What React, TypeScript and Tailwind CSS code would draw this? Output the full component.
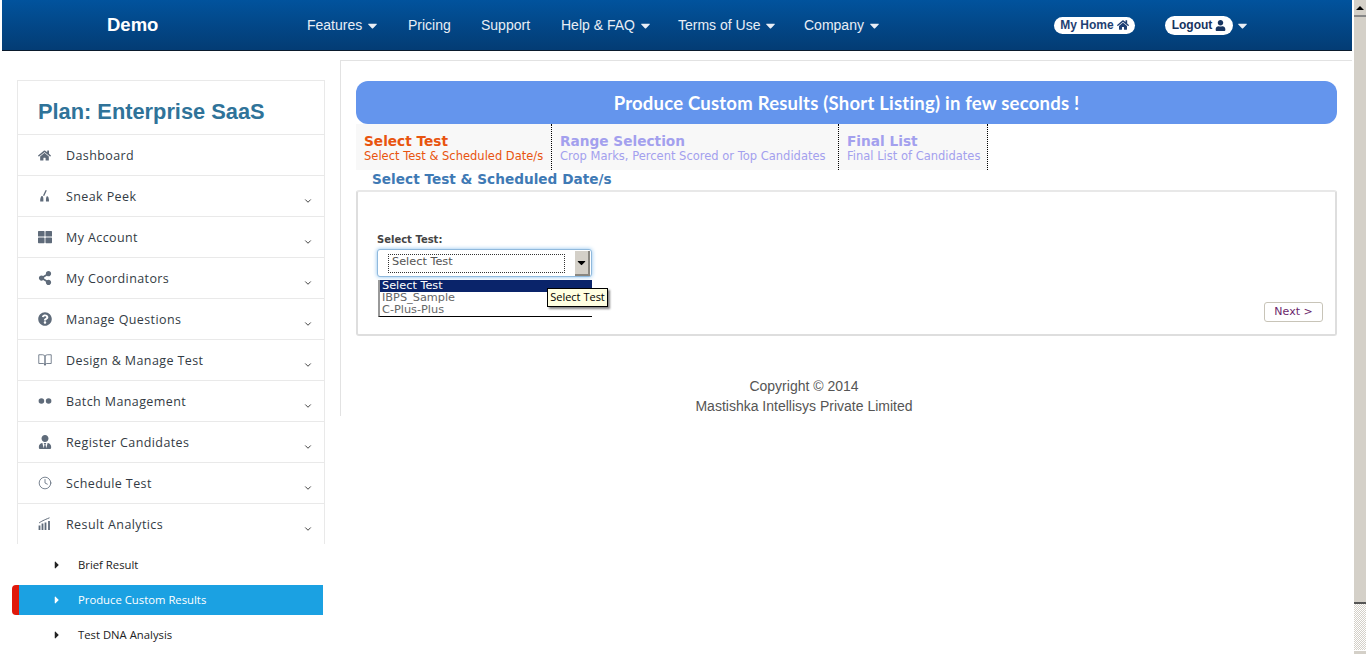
import React from 'react';
import { FaHome, FaUser, FaShareAlt, FaQuestionCircle, FaUserTie, FaCaretDown, FaCaretRight, FaThLarge } from 'react-icons/fa';
import { FiBookOpen, FiClock, FiChevronDown } from 'react-icons/fi';

const navLinks = [
  { label: 'Features', caret: true, width: 'w-[101px]' },
  { label: 'Pricing', caret: false, width: 'w-[73px]' },
  { label: 'Support', caret: false, width: 'w-[80px]' },
  { label: 'Help & FAQ', caret: true, width: 'w-[117px]' },
  { label: 'Terms of Use', caret: true, width: 'w-[126px]' },
  { label: 'Company', caret: true, width: 'w-[100px]' },
];

const SneakIcon = () => (
  <svg viewBox="0 0 14 14" className="w-[14px] h-[14px]" fill="#5f6b7a">
    <path d="M7.6 1 L8.8 1.6 L6.2 7 L5 6.6 Z" />
    <path d="M3.2 7.4 C4.8 6.4 5.6 8 5.4 12.6 L2.2 12.6 C2 10.4 2.4 8.4 3.2 7.4 Z" />
    <path d="M8.6 7.4 C10 6.8 11 8.4 11 12.6 L8 12.6 C7.8 10.4 8 8.8 8.6 7.4 Z" />
  </svg>
);

const DotsIcon = () => (
  <svg viewBox="0 0 14 14" className="w-[14px] h-[14px]" fill="#5f6b7a">
    <circle cx="3.4" cy="7" r="2.8" />
    <circle cx="10.6" cy="7" r="2.8" />
  </svg>
);

const ChartIcon = () => (
  <svg viewBox="0 0 14 14" className="w-[14px] h-[14px]" fill="none" stroke="#5f6b7a">
    <path d="M1.5 13 V8.5 M4.5 13 V6.5 M7.5 13 V5.5 M11 13 V4" strokeWidth="1.8" />
    <path d="M1 6 C3 4.5 6 3 11.5 0.8" strokeWidth="1" />
  </svg>
);

const iconClass = 'w-[14px] h-[14px] text-[#5f6b7a]';

const menuItems = [
  { label: 'Dashboard', icon: <FaHome className="w-[13px] h-[13px] text-[#5f6b7a]" />, chevron: false },
  { label: 'Sneak Peek', icon: <SneakIcon />, chevron: true },
  { label: 'My Account', icon: <FaThLarge className={iconClass} />, chevron: true },
  { label: 'My Coordinators', icon: <FaShareAlt className={iconClass} />, chevron: true },
  { label: 'Manage Questions', icon: <FaQuestionCircle className={iconClass} />, chevron: true },
  { label: 'Design & Manage Test', icon: <FiBookOpen className={iconClass} strokeWidth={1.4} />, chevron: true },
  { label: 'Batch Management', icon: <DotsIcon />, chevron: true },
  { label: 'Register Candidates', icon: <FaUserTie className={iconClass} />, chevron: true },
  { label: 'Schedule Test', icon: <FiClock className={iconClass} strokeWidth={1.4} />, chevron: true },
  { label: 'Result Analytics', icon: <ChartIcon />, chevron: true },
];

const subItems = [
  { label: 'Brief Result', active: false },
  { label: 'Produce Custom Results', active: true },
  { label: 'Test DNA Analysis', active: false },
];

const steps = [
  { title: 'Select Test', sub: 'Select Test & Scheduled Date/s', width: 'w-[196px]', color: 'text-[#e8540f]' },
  { title: 'Range Selection', sub: 'Crop Marks, Percent Scored or Top Candidates', width: 'w-[287px]', color: 'text-[#a3a0ee]' },
  { title: 'Final List', sub: 'Final List of Candidates', width: 'w-[149px]', color: 'text-[#a3a0ee]' },
];

const Header = () => (
  <header className="ml-[2px] h-[51px] shrink-0 flex items-center bg-gradient-to-b from-[#01539d] to-[#033c74] border-b border-[#0a1a2c] font-['Liberation_Sans',sans-serif] text-white">
    <div className="w-[105px] ml-[105px] text-[18.5px] font-bold">Demo</div>
    <nav className="flex ml-[95px] text-[14px] text-[#e8eef6]">
      {navLinks.map((link) => (
        <div key={link.label} className={`${link.width} flex items-center gap-[3px]`}>
          {link.label}
          {link.caret && <FaCaretDown className="w-[15px] h-[15px]" />}
        </div>
      ))}
    </nav>
    <div className="ml-[150px] w-[111px] flex items-center">
      <div className="h-[17px] w-[81px] rounded-full bg-white text-[#1f3f73] text-[12px] font-bold flex items-center justify-center gap-[3px]">
        My Home <FaHome className="w-[12px] h-[12px]" />
      </div>
    </div>
    <div className="flex items-center gap-[2px]">
      <div className="h-[19px] w-[68px] rounded-full bg-white text-[#16335f] text-[12px] font-bold flex items-center justify-center gap-[3px]">
        Logout <FaUser className="w-[11px] h-[11px]" />
      </div>
      <FaCaretDown className="w-[15px] h-[15px] text-[#e8eef6]" />
    </div>
  </header>
);

const Sidebar = () => (
  <aside className="w-[308px] ml-[17px] mt-[29px] shrink-0">
    <div className="border-x border-t border-[#e9e9e9]">
      <div className="h-[53px] pl-[20px] pt-[10px] flex items-center font-['Liberation_Sans',sans-serif] font-bold text-[21.8px] text-[#2f7399]">
        Plan: Enterprise SaaS
      </div>
      {menuItems.map((item) => (
        <div key={item.label} className="h-[41px] border-t border-[#e9e9e9] flex items-center pl-[19px] pr-[11px] font-['Open_Sans',sans-serif] text-[12.5px] tracking-[0.4px] text-[#333b44]">
          <span className="w-[15px] flex justify-center">{item.icon}</span>
          <span className="ml-[14px] flex-1 mt-[2px]">{item.label}</span>
          {item.chevron && <FiChevronDown className="w-[10px] h-[10px] mt-[9px] text-[#444]" strokeWidth={2.4} />}
        </div>
      ))}
    </div>
    <ul className="-ml-[5px] w-[311px] mt-[6px] flex flex-col gap-[5px] font-['Open_Sans',sans-serif] text-[11.3px]">
      {subItems.map((sub) => (
        <li
          key={sub.label}
          className={
            sub.active
              ? 'h-[30px] flex items-center pl-[32px] bg-[#1ba1e2] text-white border-l-[7px] border-[#e01a0c] rounded-l-[4px]'
              : 'h-[30px] flex items-center pl-[39px] text-[#222]'
          }
        >
          <FaCaretRight className={sub.active ? 'w-[12px] h-[12px] text-white' : 'w-[12px] h-[12px] text-[#222]'} />
          <span className="ml-[15px]">{sub.label}</span>
        </li>
      ))}
    </ul>
  </aside>
);

const SelectField = () => (
  <div className="relative w-[216px] ml-[19px] pt-[42px]">
    <div className="text-[10px] font-bold text-[#444] font-['DejaVu_Sans',sans-serif] leading-[12px]">Select Test:</div>
    <div className="mt-[3px] h-[28px] w-[215px] rounded-[3px] border border-[#8fb9dd] shadow-[0_0_4px_#8cc1ee] bg-white flex items-center pl-[10px] pr-[1px]">
      <div className="h-[19px] w-[177px] border border-dotted border-[#333] flex items-center pl-[3px] pb-[2px] text-[11.3px] text-[#555] font-['DejaVu_Sans',sans-serif]">
        Select Test
      </div>
      <div className="ml-auto h-[25px] w-[15px] bg-[#d4d0c8] border-r-2 border-b-2 border-[#8a8780] flex items-center justify-center">
        <FaCaretDown className="w-[13px] h-[13px] text-black" />
      </div>
    </div>
    <div className="mt-[3px] ml-[1px] w-[214px] h-[37px] border-l-2 border-b border-l-[#999] border-b-black bg-white text-[11.3px] leading-[12px] text-[#666] font-['DejaVu_Sans',sans-serif]">
      <div className="h-[12px] pl-[2px] bg-[#0a246a] text-white">Select Test</div>
      <div className="h-[12px] pl-[2px]">IBPS_Sample</div>
      <div className="h-[12px] pl-[2px]">C-Plus-Plus</div>
    </div>
    <div className="absolute left-[170px] top-[96px] h-[19px] w-[61px] bg-[#ffffe1] border border-black shadow-[2px_2px_2px_#888] flex items-center justify-center text-[11px] text-black font-['Open_Sans',sans-serif] whitespace-nowrap">
      Select Test
    </div>
  </div>
);

const Main = () => (
  <main className="ml-[15px] mt-[9px] flex-1 h-[356px] border-l border-t border-[#e2e2e2] pl-[15px] pr-[15px] pt-[20px]">
    <div className="h-[43px] pt-[2px] rounded-[12px] bg-[#6495ed] flex items-center justify-center font-['Lato',sans-serif] font-bold text-[18.5px] tracking-[0.22px] text-white">
      Produce Custom Results (Short Listing) in few seconds !
    </div>
    <div className="flex h-[46px] font-['DejaVu_Sans',sans-serif]">
      {steps.map((step) => (
        <div key={step.title} className={`${step.width} ${step.color} bg-[#f8f8f8] border-r border-dotted border-black pl-[8px] pt-[9px]`}>
          <div className="text-[13.7px] font-bold leading-[16px]">{step.title}</div>
          <div className="text-[11.5px] leading-[14px] whitespace-nowrap">{step.sub}</div>
        </div>
      ))}
    </div>
    <h2 className="ml-[16px] h-[20px] leading-[18px] font-['DejaVu_Sans',sans-serif] font-bold text-[13.67px] text-[#3f7ab5]">
      Select Test &amp; Scheduled Date/s
    </h2>
    <div className="relative h-[146px] rounded-[3px] border-2 border-[#dedede] border-t-[#e8e8e8]">
      <SelectField />
      <button className="absolute right-[12px] bottom-[12px] h-[20px] w-[59px] pt-[1px] rounded-[3px] border border-[#c8c4b8] bg-white text-[11px] text-[#6b1f6b] font-['DejaVu_Sans',sans-serif]">
        Next &gt;
      </button>
    </div>
    <footer className="mt-[40px] pr-[85px] text-center font-['Liberation_Sans',sans-serif] text-[14px] leading-[20px] text-[#555]">
      <div>Copyright © 2014</div>
      <div>Mastishka Intellisys Private Limited</div>
    </footer>
  </main>
);

const Scrollbar = () => (
  <div className="w-[14px] shrink-0 h-[654px] flex flex-col border-l-2 border-white">
    <div className="h-[17px] shrink-0 bg-[#d4d0c8] border-b-2 border-[#888] flex items-center justify-center">
      <div className="w-0 h-0 border-x-[4px] border-x-transparent border-b-[4px] border-b-black" />
    </div>
    <div className="h-[587px] shrink-0 bg-[#d4d0c8] border-b-2 border-[#555]" />
    <div className="h-[46px] shrink-0 bg-[repeating-conic-gradient(#d4d0c8_0_25%,#ffffff_0_50%)] bg-[length:2px_2px]" />
    <div className="h-[4px] shrink-0 bg-[#d4d0c8] border-t border-white" />
  </div>
);

const App = () => (
  <div className="w-[1366px] h-[654px] overflow-hidden bg-white flex">
    <div className="w-[1352px] h-[654px] flex flex-col">
      <Header />
      <div className="flex flex-1 items-start">
        <Sidebar />
        <Main />
      </div>
    </div>
    <Scrollbar />
  </div>
);

export default App;
